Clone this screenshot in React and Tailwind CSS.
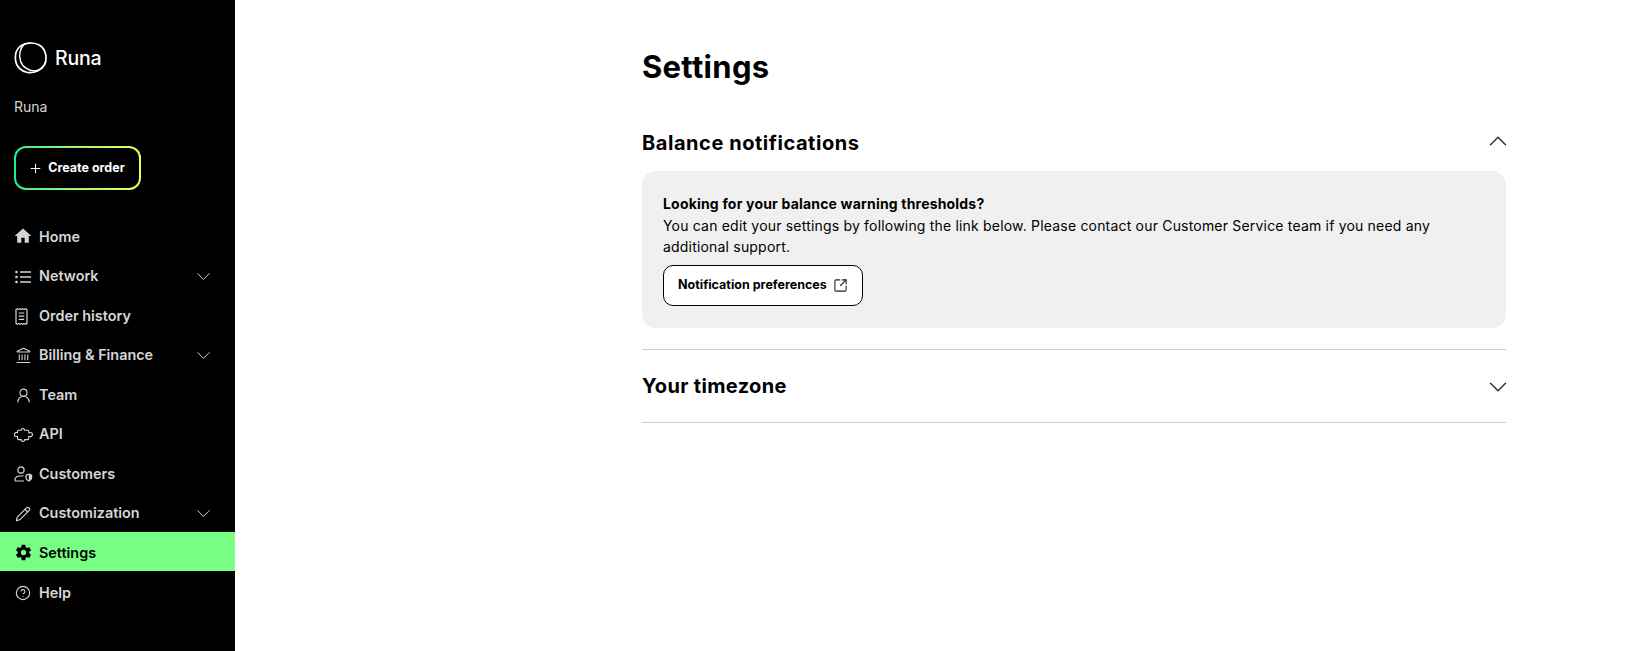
import React from "react";
import { ChevronDown, ChevronUp, Landmark, UserRound, Pencil, CircleHelp, Plus, SquareArrowOutUpRight } from "lucide-react";
import { IoSettingsSharp } from "react-icons/io5";
import { MdHome } from "react-icons/md";

function Logo() {
  return (
    <svg width="34" height="34" viewBox="0 0 34 34" fill="none" stroke="white" strokeLinecap="round" className="shrink-0">
      <path d="M5 6.500C10 1.500 20 .5 26 4.500c6 4 7.500 13 4.500 19-3 5.500-10 9-17 8-6-1-11.500-6-12-12.500C1 14 2 9.500 5 6.500z" strokeWidth="1.7" />
      <path d="M11 2.800C6 6.500 4.500 13.500 6.500 20c2 6 8.500 10.500 15 9.800 5.500-.6 9.500-4.500 10.300-9.300" strokeWidth="1.4" />
    </svg>
  );
}

function ListIcon() {
  return (
    <svg width="16" height="14" viewBox="0 0 16 14" fill="none" stroke="currentColor" strokeWidth="1.4">
      <circle cx="1.500" cy="2" r="1.300" fill="currentColor" stroke="none" />
      <circle cx="1.500" cy="7" r="1.300" fill="currentColor" stroke="none" />
      <circle cx="1.500" cy="12" r="1.300" fill="currentColor" stroke="none" />
      <path d="M5 2h11M5 7h11M5 12h11" />
    </svg>
  );
}

function ReceiptIcon() {
  return (
    <svg width="13" height="17" viewBox="0 0 13 17" fill="none" stroke="currentColor" strokeWidth="1.2" strokeLinejoin="round">
      <path d="M1 1.500l1.400-.8 1.300.8 1.400-.8 1.400.8 1.400-.8 1.400.8 1.300-.8 1.400.8v14l-1.400.8-1.300-.8-1.400.8-1.400-.8-1.400.8-1.400-.8-1.300.8-1.400-.8z" />
      <path d="M3.800 5h5.400M3.800 8.200h5.400M3.800 11.400h5.400" />
    </svg>
  );
}

function PuzzleWide() {
  return (
    <svg width="19" height="14" viewBox="0 0 19 14" fill="none" stroke="currentColor" strokeWidth="1.1" strokeLinejoin="round" className="-ml-[1px]">
      <path d="M4.500 2.300H7.200C6.900 1.200 7.700.6 8.800.6s2 .6 1.600 1.700h3.400c.6 0 1 .4 1 1V5c.9-.6 1.700-.7 2.500-.3 1 .5 1.300 1.500 1.100 2.400-.2 1.200-1.500 2-3.600 1.200v2.300c0 .6-.4 1-1 1h-3.300c.4 1-.5 1.800-1.600 1.800S7 12.600 7.300 11.600H4.500c-.6 0-1-.4-1-1V8.300C1.700 9 .7 8.200.5 7.100.3 6 1 4.900 2 4.600c.5-.1 1-.1 1.500.2V3.300c0-.6.400-1 1-1z" />
    </svg>
  );
}

function UserShield() {
  return (
    <svg width="19" height="16" viewBox="0 0 19 16" fill="none" stroke="currentColor" strokeWidth="1.2" className="-ml-[1px]">
      <circle cx="7" cy="4" r="3.100" />
      <path d="M10 15H2.200c-.9 0-1.400-.6-1.200-1.500.5-2.200 2.400-3.500 4.500-3.500h4" />
      <path d="M12 9.200l2.800-1 2.800 1v2.500c0 1.500-1.200 2.600-2.800 3.300-1.600-.7-2.800-1.800-2.800-3.300z" />
      <path d="M14.800 8.400l2.700.9v2.400c0 1.400-1.100 2.500-2.700 3.200z" fill="currentColor" stroke="none" />
    </svg>
  );
}

const items = [
  { label: "Home", icon: <MdHome size={20} className="-ml-[2px] -translate-y-[1px]" /> },
  { label: "Network", icon: <ListIcon />, chevron: true },
  { label: "Order history", icon: <ReceiptIcon /> },
  { label: "Billing & Finance", icon: <Landmark size={17} strokeWidth={1.5} />, chevron: true },
  { label: "Team", icon: <UserRound size={17} strokeWidth={1.6} /> },
  { label: "API", icon: <PuzzleWide /> },
  { label: "Customers", icon: <UserShield /> },
  { label: "Customization", icon: <Pencil size={16} strokeWidth={1.7} />, chevron: true },
  { label: "Settings", icon: <IoSettingsSharp size={17} />, active: true },
  { label: "Help", icon: <CircleHelp size={16} strokeWidth={1.7} /> },
];

function NavItem({ label, icon, chevron, active }) {
  return (
    <div className={active ? "-mt-[1px] mb-[2px] flex h-[39px] items-center bg-[#76ff83] pl-[14px] pr-[20px] pt-[2px] text-black" : "flex h-[39.5px] items-center pl-[14px] pr-[20px] text-[#d6d6d6]"}>
      <span className="flex w-[25px] shrink-0 items-center justify-start pl-[1px]">{icon}</span>
      <span className="flex-1 text-[14.4px] font-semibold leading-none">{label}</span>
      {chevron && <ChevronDown size={23} strokeWidth={1} className="text-[#d6d6d6]" />}
    </div>
  );
}

export default function App() {
  return (
    <div className="flex min-h-[651px] bg-white font-['Inter',sans-serif] text-black">
      <aside className="flex w-[235px] shrink-0 flex-col bg-black pt-[41px]">
        <div className="flex items-center gap-[7px] pl-[14px]">
          <Logo />
          <span className="translate-y-[1px] text-[19.5px] font-medium leading-none tracking-[-0.2px] text-white">Runa</span>
        </div>
        <div className="mt-[22px] pl-[14px] text-[14px] leading-[20px] text-[#d6d6d6]">Runa</div>
        <div className="mt-[29px] pl-[14px]">
          <div className="inline-block rounded-[12px] bg-gradient-to-r from-[#0cf08c] to-[#e6ff52] p-[2px]">
            <div className="flex h-[40px] w-[123px] items-center justify-center gap-[5px] rounded-[10px] bg-black pr-[2px] text-[12.5px] font-bold text-white">
              <Plus size={15} strokeWidth={1.6} />
              Create order
            </div>
          </div>
        </div>
        <nav className="mt-[27.4px] flex flex-col">
          {items.map((it) => (
            <NavItem key={it.label} {...it} />
          ))}
        </nav>
      </aside>
      <main className="flex-1 pl-[407px] pt-[48px]">
        <div className="w-[864px]">
          <h1 className="text-[31px] font-bold leading-[38px] tracking-[0.3px]">Settings</h1>
          <div className="mt-[38px] flex h-[38px] items-center justify-between">
            <h2 className="text-[20px] font-bold leading-none tracking-[0.55px]">Balance notifications</h2>
            <ChevronUp size={30} strokeWidth={1.2} className="-mr-[7px] -translate-y-[2px] text-[#333]" />
          </div>
          <div className="mt-[9px] rounded-[14px] bg-[#f0f0f0] px-[21px] pb-[22px] pt-[22px] text-[14px] leading-[21.5px] tracking-[0.19px]">
            <p className="font-bold">Looking for your balance warning thresholds?</p>
            <p className="w-[790px]">You can edit your settings by following the link below. Please contact our Customer Service team if you need any additional support.</p>
            <div className="mt-[7px] inline-flex h-[41px] w-[200px] items-center gap-[6px] rounded-[10px] border border-black bg-white pl-[14px] text-[12.5px] font-bold tracking-normal">
              Notification preferences
              <SquareArrowOutUpRight size={15} strokeWidth={1.7} className="text-[#222]" />
            </div>
          </div>
          <div className="mt-[21px] flex h-[74px] items-center justify-between border-y border-[#d0d0d0]">
            <h2 className="text-[20px] font-bold leading-none tracking-[0.35px]">Your timezone</h2>
            <ChevronDown size={30} strokeWidth={1.2} className="-mr-[7px] translate-y-[1px] text-[#333]" />
          </div>
        </div>
      </main>
    </div>
  );
}
